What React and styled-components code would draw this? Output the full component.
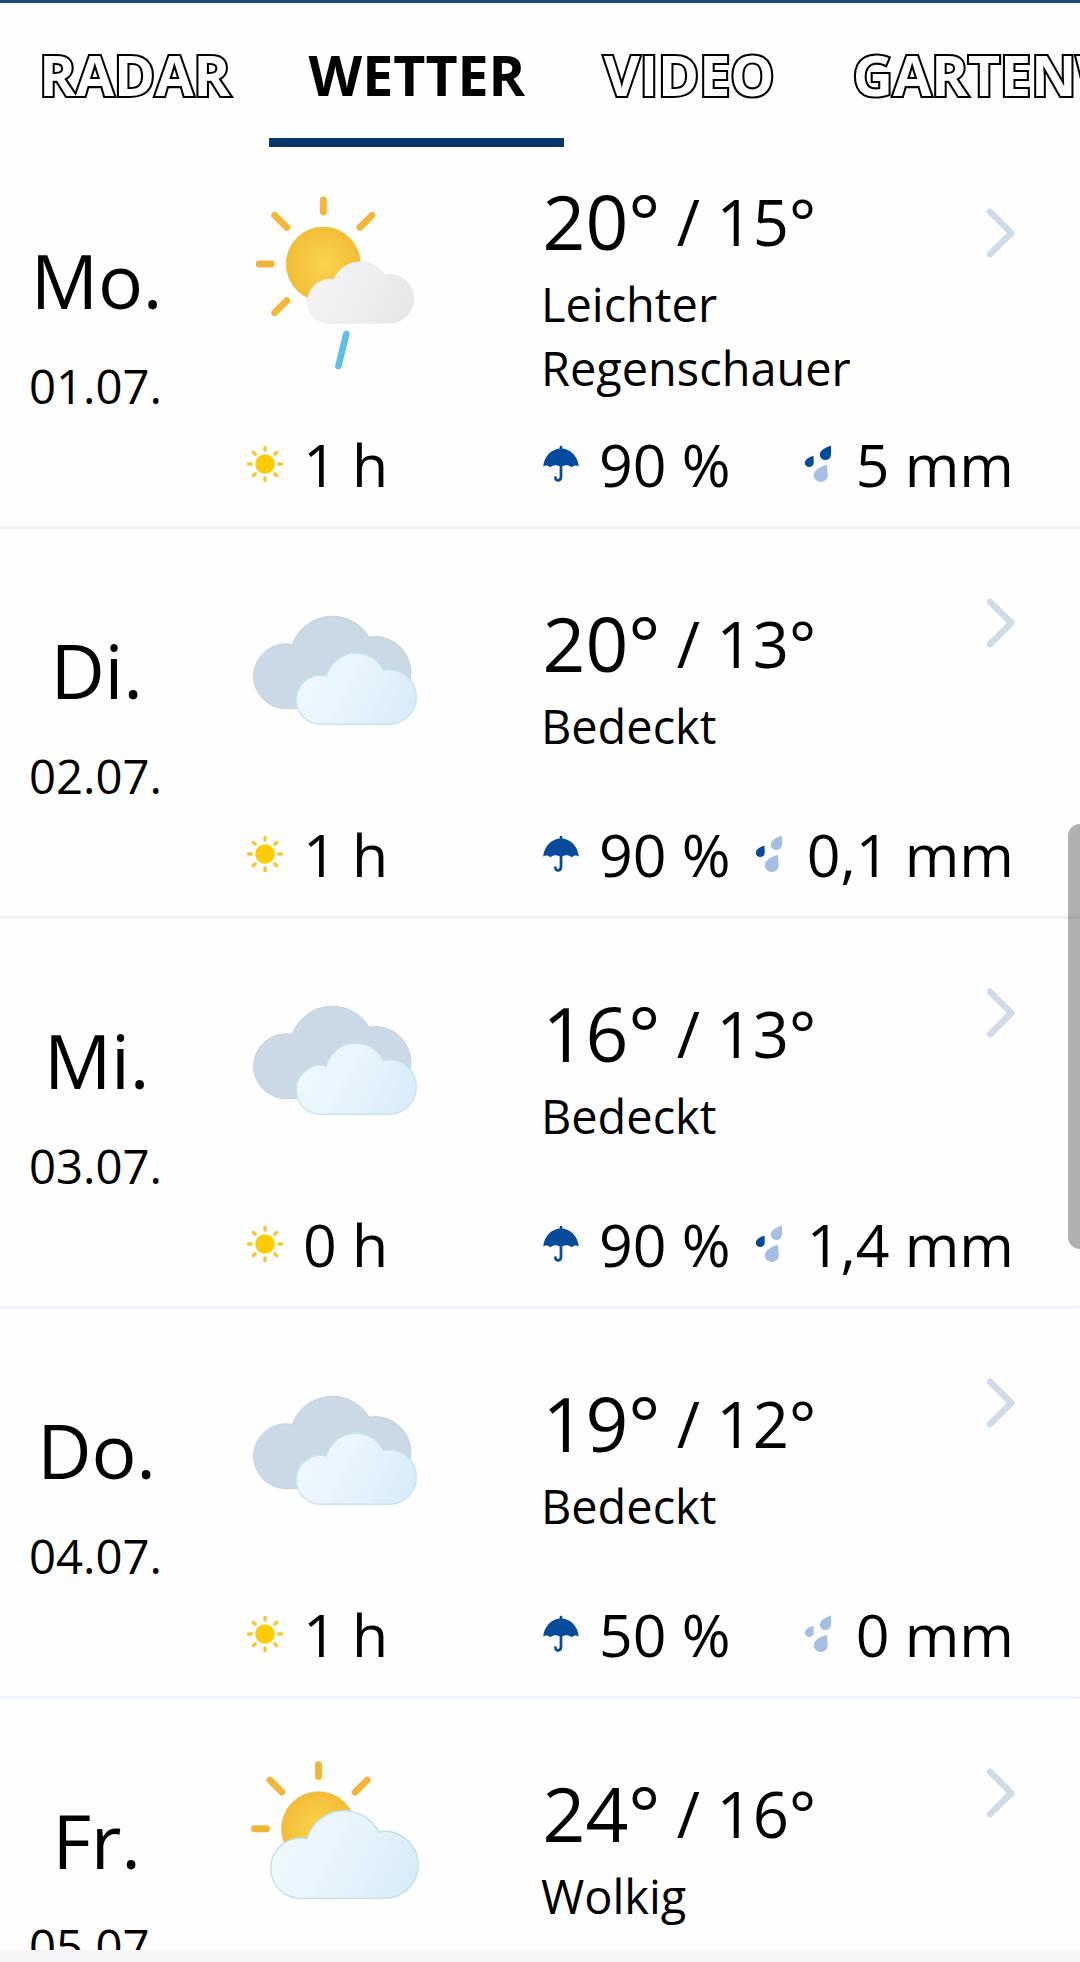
import React from "react";
import styled, { createGlobalStyle } from "styled-components";

const GlobalStyle = createGlobalStyle`
  * {
    box-sizing: border-box;
  }
  body {
    margin: 0;
    background: #fefefe;
    color: #000;
    font-family: "Open Sans", "Noto Sans", sans-serif;
    overflow: hidden;
  }
`;
const Page = styled.div`
  position: relative;
  display: flex;
  flex-direction: column;
  width: 1080px;
  height: 1962px;
  overflow: hidden;
`;
const Header = styled.nav`
  display: flex;
  flex: none;
  height: 147px;
  border-top: 3px solid #1b4b7e;
  overflow: hidden;
`;
const Tab = styled.div`
  flex: none;
  height: 144px;
  padding: 0 39.2px;
  font-size: 55.5px;
  font-weight: 700;
  line-height: 143px;
  color: ${(props) => (props.$active ? "#000" : "#fff")};
  border-bottom: 9px solid ${(props) => (props.$active ? "#0b366d" : "transparent")};
  -webkit-text-stroke: ${(props) => (props.$active ? "0" : "4.2px #000")};
  paint-order: stroke fill;
`;
const List = styled.div`
  flex: 1;
  overflow: hidden;
`;
const Row = styled.div`
  display: grid;
  grid-template-columns: 245px 296px 1fr 94px;
  grid-template-rows: 290px 97px;
  height: 390px;
  border-bottom: 3px solid #edf3f9;
  &:first-child {
    margin-top: -8px;
  }
`;
const Day = styled.div`
  width: 191px;
  padding-top: 89px;
  text-align: center;
  & h2 {
    margin: 0;
    padding-left: 2px;
    font-size: 75px;
    font-weight: 400;
    line-height: 104px;
    letter-spacing: -0.3px;
  }
  & p {
    margin: 21px 0 0;
    font-size: 47.3px;
    line-height: 66px;
  }
`;
const IconCell = styled.div`
  padding-top: 45px;
  & svg {
    display: block;
  }
`;
const Summary = styled.div`
  display: flex;
  flex-direction: column;
  justify-content: center;
  padding-top: 2px;
`;
const Temps = styled.div`
  display: flex;
  align-items: center;
  height: 102px;
  padding-left: 1.5px;
  font-size: 75px;
  white-space: pre;
`;
const Low = styled.span`
  font-size: 63.3px;
`;
const Description = styled.div`
  width: 330px;
  font-size: 46.9px;
  line-height: 64px;
`;
const ArrowCell = styled.div`
  padding-top: 69px;
`;
const Stats = styled.div`
  grid-column: 2 / 5;
  display: grid;
  grid-template-columns: 297px 190px 1fr;
  align-items: center;
  height: 71px;
  margin-left: 1px;
  padding-right: 66px;
`;
const Stat = styled.div`
  display: flex;
  align-items: center;
  justify-content: ${(props) => (props.$end ? "flex-end" : "flex-start")};
  font-size: 59px;
  line-height: 69px;
  white-space: nowrap;
  & svg {
    flex: none;
    margin-right: ${(props) => props.$gap}px;
    margin-bottom: 1px;
  }
`;
const Bottom = styled.div`
  flex: none;
  height: 12px;
  background: #f6f6f9;
`;
const ScrollThumb = styled.div`
  position: absolute;
  top: 824px;
  right: 0;
  width: 12.5px;
  height: 425px;
  border-radius: 12px 0 0 12px;
  background: rgba(0, 0, 0, 0.305);
`;

const Gradients = () => (
  <defs>
    <radialGradient id="sun">
      <stop offset="0" stopColor="#f9d54c" />
      <stop offset="1" stopColor="#f4bc37" />
    </radialGradient>
    <linearGradient id="grey" x1="0" y1="0.3" x2="1" y2="0.6">
      <stop offset="0" stopColor="#f4f4f4" />
      <stop offset="0.5" stopColor="#efefef" />
      <stop offset="1" stopColor="#e7e7e7" />
    </linearGradient>
    <linearGradient id="light" x1="0" y1="0.3" x2="1" y2="0.6">
      <stop offset="0" stopColor="#f1f8fe" />
      <stop offset="0.4" stopColor="#eaf5fd" />
      <stop offset="1" stopColor="#d9ecf9" />
    </linearGradient>
  </defs>
);

const Sun = ({ x, y, lower }) => (
  <g transform={`translate(${x} ${y})`}>
    <circle r="37" fill="url(#sun)" stroke="#efbd48" strokeWidth="0.8" />
    <path
      d={`M0 -52V-64M-52 0H-64M-36.6 -36.6L-48.6 -48.6M36.6 -36.6L48.6 -48.6${
        lower ? "M-36.6 36.6L-48.6 48.6" : ""
      }`}
      stroke="#f3b638"
      strokeWidth="6.9"
      strokeLinecap="round"
    />
  </g>
);

const ShowerIcon = () => (
  <svg width="180" height="200" viewBox="0 0 180 200" fill="none">
    <Gradients />
    <Sun x={78.3} y={80} lower />
    <path
      d="M84.6 139A22 22 0 0 1 62.6 117A22 22 0 0 1 88.5 95.4A29 29 0 0 1 139.4 90.8A24.3 24.3 0 0 1 168.6 114.7A24.3 24.3 0 0 1 144.3 139Z"
      fill="url(#grey)"
      stroke="#e4e4e4"
      strokeWidth="0.8"
    />
    <path d="M101.3 150L93.4 182" stroke="#5fbee5" strokeWidth="6.6" strokeLinecap="round" />
  </svg>
);

const OvercastIcon = () => (
  <svg width="180" height="200" viewBox="0 0 180 200" fill="none">
    <Gradients />
    <path
      d="M41 134.6A32.4 32.4 0 0 1 8.6 102.2A32.4 32.4 0 0 1 47.3 70.4A42.6 42.6 0 0 1 124 63.1A36 36 0 0 1 166 98.6A36 36 0 0 1 130 134.6Z"
      fill="#cbd8e5"
      stroke="#c6d1de"
      strokeWidth="1"
    />
    <path
      d="M75.6 150.2A24.4 24.4 0 0 1 51.2 125.8A24.4 24.4 0 0 1 81.4 102.1A30.4 30.4 0 0 1 138.3 96.6A27.1 27.1 0 0 1 171.3 123.1A27.1 27.1 0 0 1 144.2 150.2Z"
      fill="url(#light)"
      stroke="#c8e4ef"
      strokeWidth="1.4"
    />
  </svg>
);

const CloudyIcon = () => (
  <svg width="180" height="200" viewBox="0 0 180 200" fill="none">
    <Gradients />
    <Sun x={73.5} y={84.7} />
    <path
      d="M55.9 154.4A30.2 30.2 0 0 1 25.7 124.2A30.2 30.2 0 0 1 62 94.7A38.8 38.8 0 0 1 133.8 87.9A33.6 33.6 0 0 1 173.3 120.8A33.6 33.6 0 0 1 139.7 154.4Z"
      fill="url(#light)"
      stroke="#c3e0ea"
      strokeWidth="1.4"
    />
  </svg>
);

const SmallSun = () => (
  <svg width="38" height="38" viewBox="-19 -19 38 38">
    <circle r="9.8" fill="#fecb04" />
    {[0, 45, 90, 135, 180, 225, 270, 315].map((angle) => (
      <path
        key={angle}
        d="M0 -13.9V-16.5"
        transform={`rotate(${angle})`}
        stroke="#f7c62e"
        strokeWidth="3.4"
        strokeLinecap="round"
      />
    ))}
  </svg>
);

const Umbrella = () => (
  <svg width="36" height="38" viewBox="0 0 36 38" fill="none">
    <path
      d="M0.2 21.4C1 11.5 8.5 3.4 18 3.4S35 11.5 35.8 21.4C33.5 20.2 31 20.3 28.6 22.3C25.5 20 22.5 19.8 19.8 21.2H16.2C13.5 19.8 10.5 20 7.4 22.3C5 20.3 2.5 20.2 0.2 21.4Z"
      fill="#054a9b"
    />
    <path
      d="M18 2V5M18 20V31.8C18 36.4 12.4 36.4 12.4 32.6"
      stroke="#054a9b"
      strokeWidth="2.7"
      strokeLinecap="round"
    />
  </svg>
);

const DARK = "#054a9b";
const PALE = "#a5bfe4";

// level 0 leaves all drops pale, each further level darkens one more
const Drops = ({ level }) => (
  <svg width="28" height="38" viewBox="0 0 28 38">
    <path
      d="M9.6 10.7C6 11.6 0.8 14 0.8 17.8A4.4 4.2 0 0 0 9.7 17.8Z"
      fill={level > 0 ? DARK : PALE}
    />
    <path
      d="M27 0.4C22 2 15.8 5 15.8 9.6A5.6 5.4 0 0 0 27 9.6Z"
      fill={level > 1 ? DARK : PALE}
    />
    <path
      d="M22.8 19.7C17.5 21.2 9.8 24.6 9.8 30.3A7 6.8 0 0 0 23.8 30.3Z"
      fill={level > 2 ? DARK : PALE}
    />
  </svg>
);

const Arrow = () => (
  <svg width="30" height="50" viewBox="0 0 30 50" fill="none">
    <path
      d="M4 3.7L25.3 25L4 46.3"
      stroke="#cfdbe9"
      strokeWidth="6.4"
      strokeLinecap="round"
      strokeLinejoin="round"
    />
  </svg>
);

const icons = {
  shower: ShowerIcon,
  overcast: OvercastIcon,
  cloudy: CloudyIcon,
};

const tabs = ["RADAR", "WETTER", "VIDEO", "GARTENWETTER"];

const days = [
  { day: "Mo.", date: "01.07.", icon: "shower", high: 20, low: 15, text: "Leichter Regenschauer", sun: "1 h", risk: "90 %", rain: "5 mm", level: 2 },
  { day: "Di.", date: "02.07.", icon: "overcast", high: 20, low: 13, text: "Bedeckt", sun: "1 h", risk: "90 %", rain: "0,1 mm", level: 1 },
  { day: "Mi.", date: "03.07.", icon: "overcast", high: 16, low: 13, text: "Bedeckt", sun: "0 h", risk: "90 %", rain: "1,4 mm", level: 1 },
  { day: "Do.", date: "04.07.", icon: "overcast", high: 19, low: 12, text: "Bedeckt", sun: "1 h", risk: "50 %", rain: "0 mm", level: 0 },
  { day: "Fr.", date: "05.07.", icon: "cloudy", high: 24, low: 16, text: "Wolkig" },
];

const DayRow = ({ item }) => {
  const Icon = icons[item.icon];
  return (
    <Row>
      <Day>
        <h2>{item.day}</h2>
        <p>{item.date}</p>
      </Day>
      <IconCell>
        <Icon />
      </IconCell>
      <Summary>
        <Temps>
          {item.high}°<Low> / {item.low}°</Low>
        </Temps>
        <Description>{item.text}</Description>
      </Summary>
      <ArrowCell>
        <Arrow />
      </ArrowCell>
      {item.sun && (
        <Stats>
          <Stat $gap={19}>
            <SmallSun />
            {item.sun}
          </Stat>
          <Stat $gap={20}>
            <Umbrella />
            {item.risk}
          </Stat>
          <Stat $gap={24} $end>
            <Drops level={item.level} />
            {item.rain}
          </Stat>
        </Stats>
      )}
    </Row>
  );
};

const App = () => {
  return (
    <Page>
      <GlobalStyle />
      <Header>
        {tabs.map((tab) => (
          <Tab key={tab} $active={tab === "WETTER"}>
            {tab}
          </Tab>
        ))}
      </Header>
      <List>
        {days.map((item) => (
          <DayRow key={item.date} item={item} />
        ))}
      </List>
      <Bottom />
      <ScrollThumb />
    </Page>
  );
};

export default App;
